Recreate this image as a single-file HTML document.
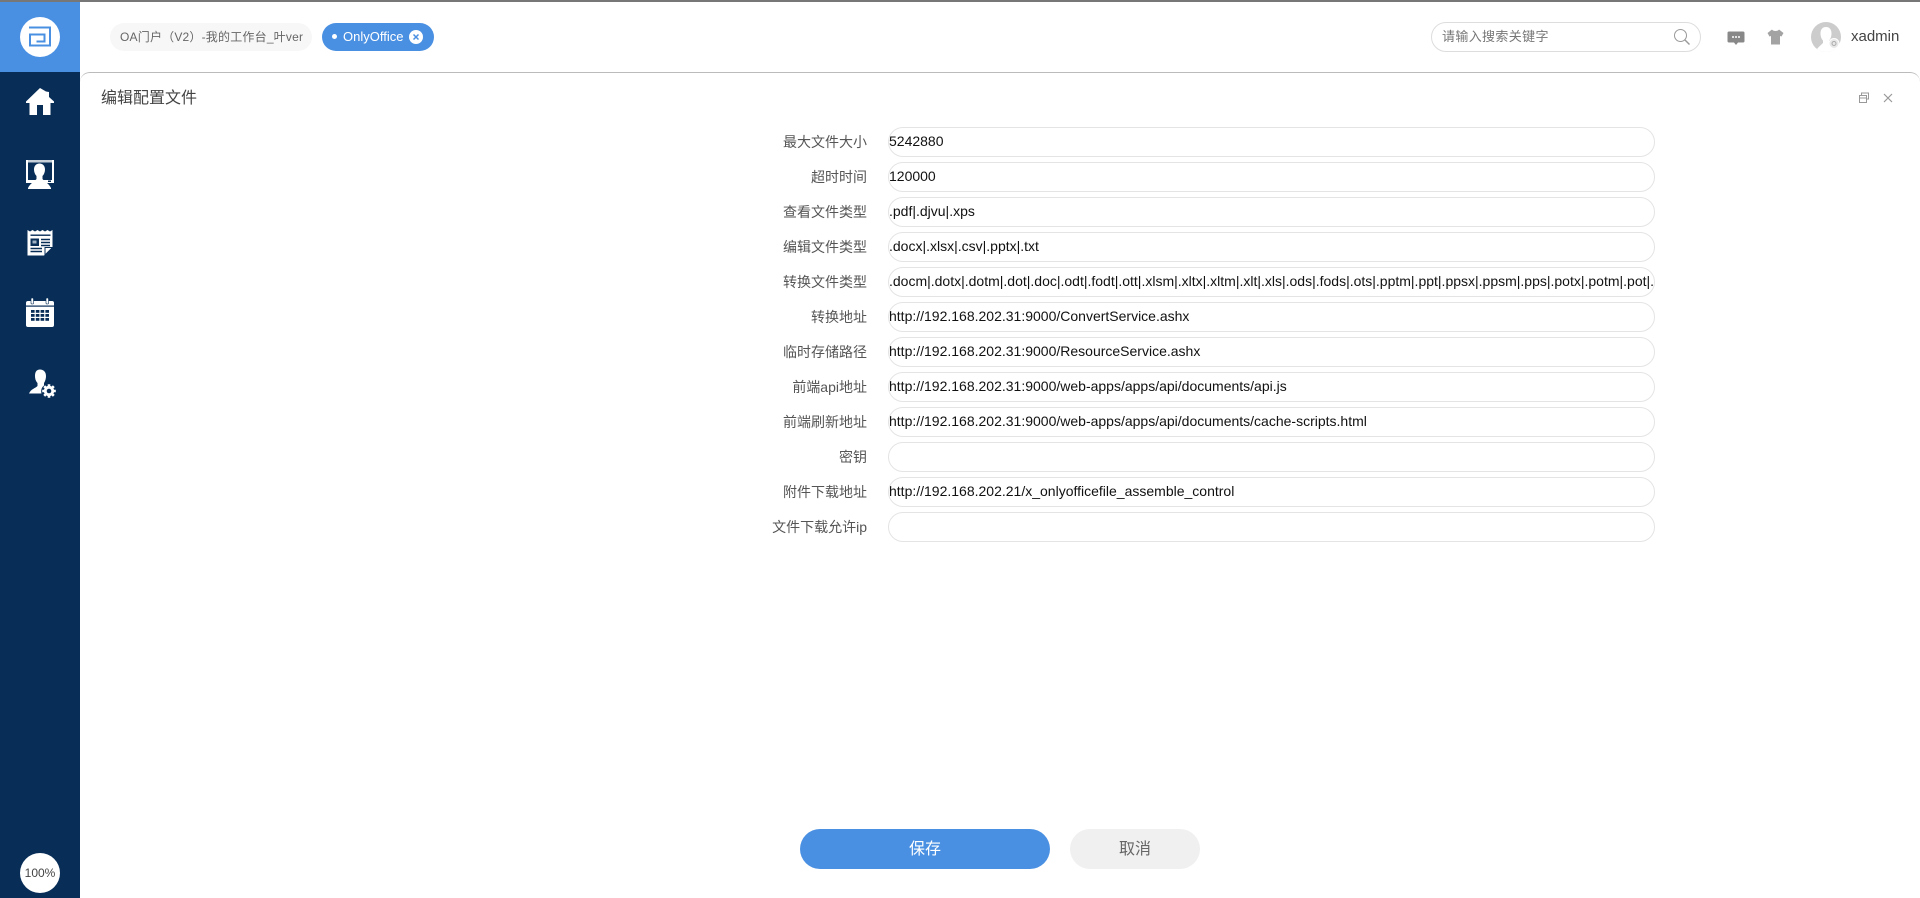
<!DOCTYPE html>
<html lang="zh"><head><meta charset="utf-8"><title>编辑配置文件</title>
<style>
*{box-sizing:border-box}
html,body{margin:0;padding:0;width:1920px;height:898px;overflow:hidden;background:#fff;font-family:"Liberation Sans","Noto Sans CJK SC",sans-serif}
.a{position:absolute}
.lab{position:absolute;left:700px;width:167px;height:30px;line-height:30px;text-align:right;font-size:14px;color:#555;white-space:nowrap}
.inp{position:absolute;left:888px;width:767px;height:30px;border:1px solid #e4e4e4;border-radius:15px;font-size:14px;line-height:26px;color:#111;padding:0;white-space:nowrap;overflow:hidden}
.inp span{display:block;margin-left:0;width:764px;overflow:hidden}
svg{position:absolute;display:block}
</style></head><body>
<div class="a" style="left:0;top:0;width:1920px;height:2px;background:#777"></div>
<div class="a" style="left:0;top:2px;width:80px;height:70px;background:#4a90e2"></div>
<div class="a" style="left:0;top:72px;width:80px;height:826px;background:#082e58"></div>
<div class="a" style="left:20px;top:17px;width:40px;height:40px;border-radius:50%;background:#fff"></div>
<svg style="left:28px;top:25px" width="24" height="22" viewBox="0 0 24 22" fill="none" stroke="#4a90e2" stroke-width="2"><path d="M1 2.500H22V20.500H2V9.500H16.500V16.500H8.500"/></svg>

<!-- sidebar icons -->
<svg style="left:25px;top:87px" width="30" height="30" viewBox="0 0 30 30" fill="#fff"><path d="M15 1L1 14.500V16H4.500V28H12V18H18V28H25.500V16H29V14.500L24 10V5H24L21 4.500L15 1Z"/></svg>
<svg style="left:25px;top:159px" width="30" height="31" viewBox="0 0 30 31" fill="#fff"><rect x="1" y="1" width="28" height="2.500" fill="#c6ced8"/><path d="M1 1H3V21H27V1H29V24H1Z"/><path d="M14.500 4.500C11 4.500 9 7 9 10.500C9 13 10 15.500 11.500 17V20C10 22 5.500 24 3 29V30H26V29C23.500 24 19 22 17.500 20V17C19 15.500 20 13 20 10.500C20 7 18 4.500 14.500 4.500Z"/><rect x="23" y="21.500" width="3" height="1.500" fill="#082e58"/></svg>
<svg style="left:26px;top:229px" width="28" height="28" viewBox="0 0 28 28"><path fill="#fff" d="M1.500 1L4 2.500L6.500 1L9 2.500L11.500 1L14 2.500L16.500 1L19 2.500L21.500 1L24 2.500L26.500 1V18L18 26.500H1.500Z"/><path fill="#fff" stroke="#082e58" d="M26.500 18.500H19V26Z"/><rect x="4.500" y="5.500" width="20" height="1.400" fill="#082e58"/><rect x="4.500" y="9.500" width="8.500" height="7.500" fill="#082e58"/><rect x="6.500" y="11.500" width="4" height="3" fill="#9db0c4"/><path stroke="#082e58" stroke-width="1.500" d="M15 10.500H24M15 13.500H24M15 16.500H24M4.500 19.500H16M4.500 22.500H16"/></svg>
<svg style="left:25px;top:298px" width="30" height="30" viewBox="0 0 30 30"><rect x="1" y="3" width="28" height="26" rx="2" fill="#fff"/><rect x="6" y="0" width="2.500" height="6" rx="1" fill="#fff" stroke="#082e58" stroke-width=".6"/><rect x="21" y="0" width="2.500" height="6" rx="1" fill="#fff" stroke="#082e58" stroke-width=".6"/><rect x="1" y="7.500" width="28" height="1.200" fill="#082e58"/><g fill="#082e58"><rect x="6" y="12" width="3.600" height="2.800"/><rect x="10.800" y="12" width="3.600" height="2.800"/><rect x="15.600" y="12" width="3.600" height="2.800"/><rect x="20.400" y="12" width="3.600" height="2.800"/><rect x="6" y="16" width="3.600" height="2.800"/><rect x="10.800" y="16" width="3.600" height="2.800"/><rect x="15.600" y="16" width="3.600" height="2.800"/><rect x="20.400" y="16" width="3.600" height="2.800"/><rect x="6" y="20" width="3.600" height="2.800"/><rect x="10.800" y="20" width="3.600" height="2.800"/><rect x="15.600" y="20" width="3.600" height="2.800"/><rect x="20.400" y="20" width="3.600" height="2.800"/></g></svg>
<svg style="left:28px;top:369px" width="29" height="30" viewBox="0 0 29 30" fill="#fff"><path d="M12 0.500C8.500 0.500 7 3 7 7C7 10 8 12.500 9.500 14V17C7 19.500 3 20 1 24.500H13.500C12.500 21 14 18 16 16.500V14C17 12.500 18 10 18 7C18 3 15.500 0.500 12 0.500Z"/><circle cx="21" cy="22" r="5.200"/><g stroke="#fff" stroke-width="2.600"><path d="M21 15.200V28.800M14.200 22H27.800M16.200 17.200L25.800 26.800M25.800 17.200L16.200 26.800"/></g><circle cx="21" cy="22" r="2.300" fill="#082e58"/></svg>

<div class="a" style="left:20px;top:853px;width:40px;height:40px;border-radius:50%;background:#fff;font-size:12px;line-height:41px;text-align:center;color:#444">100%</div>

<!-- tabs -->
<div class="a" style="left:110px;top:23px;width:202px;height:28px;border-radius:14px;background:#f7f7f7;font-size:12px;line-height:28px;color:#666;padding-left:10px;white-space:nowrap;letter-spacing:.2px">OA门户（V2）-我的工作台_叶ver</div>
<div class="a" style="left:322px;top:23px;width:112px;height:28px;border-radius:14px;background:#4a90e2;font-size:13px;line-height:27px;color:#fff;padding-left:21px;white-space:nowrap">OnlyOffice</div>
<div class="a" style="left:332px;top:34px;width:5px;height:5px;border-radius:50%;background:#fff"></div>
<svg style="left:409px;top:30px" width="14" height="14" viewBox="0 0 14 14"><circle cx="7" cy="7" r="7" fill="#fff"/><path d="M4.500 4.500L9.500 9.500M9.500 4.500L4.500 9.500" stroke="#4a90e2" stroke-width="1.500"/></svg>

<!-- search -->
<div class="a" style="left:1431px;top:22px;width:270px;height:30px;border:1px solid #ddd;border-radius:15px;font-size:13px;line-height:28px;color:#777;padding-left:10px;letter-spacing:.35px">请输入搜索关键字</div>
<svg style="left:1673px;top:28px" width="18" height="18" viewBox="0 0 18 18" fill="none" stroke="#999" stroke-width="1"><circle cx="7.500" cy="7.500" r="6"/><path d="M12 12L16.500 16.500" stroke-width="1.400"/></svg>

<!-- top icons -->
<svg style="left:1727px;top:31px" width="18" height="15" viewBox="0 0 18 15"><path fill="#888" d="M2 0.500H16Q17.500 .5 17.500 2V10Q17.500 11.500 16 11.500H11L9 14L7 11.500H2Q.5 11.500 .5 10V2Q.5 .5 2 .5Z"/><g fill="#fff"><circle cx="6" cy="6" r="1"/><circle cx="9" cy="6" r="1"/><circle cx="12" cy="6" r="1"/></g></svg>
<svg style="left:1767px;top:29px" width="17" height="16" viewBox="0 0 17 16"><path fill="#a3a3a3" d="M5 .5L.5 4L2.500 7.500L4 7V15.500H13V7L14.500 7.500L16.500 4L12 .5C11 2.500 6 2.500 5 .5Z"/></svg>
<svg style="left:1811px;top:22px" width="30" height="30" viewBox="0 0 30 30"><circle cx="15" cy="15" r="15" fill="#ccc"/><path fill="#fff" d="M15 5C11 5 9.500 8 9.500 11.500C9.500 14.500 10.500 17 12 18.500V21C10 23 7.500 25 6 27C8.500 29 11.500 30 15 30C18.500 30 21.500 29 24 27C22.500 25 20 23 18 21V18.500C19.500 17 20.500 14.500 20.500 11.500C20.500 8 19 5 15 5Z"/><circle cx="23" cy="21.500" r="5" fill="#e8e8e8" stroke="#fff"/><circle cx="23" cy="21.500" r="2" fill="none" stroke="#aaa"/></svg>
<div class="a" style="left:1851px;top:27px;font-size:15px;line-height:20px;color:#444">xadmin</div>

<!-- panel -->
<div class="a" style="left:80px;top:72px;width:1840px;height:12px;border-top:1px solid #bbb;border-radius:10px 10px 0 0;background:#fff"></div>
<div class="a" style="left:80px;top:72px;width:8px;height:8px;background:#999;z-index:-1"></div>
<div class="a" style="left:1912px;top:72px;width:8px;height:8px;background:#999;z-index:-1"></div>
<div class="a" style="left:101px;top:86px;font-size:16px;line-height:26px;color:#444">编辑配置文件</div>
<svg style="left:1858px;top:92px" width="12" height="12" viewBox="0 0 12 12" fill="none" stroke="#999"><path d="M3.500 3V1H10.500V7H8.500"/><rect x="1.500" y="3.500" width="7" height="7"/><path d="M1.500 6H8.500"/></svg>
<svg style="left:1882px;top:92px" width="12" height="12" viewBox="0 0 12 12" fill="none" stroke="#999" stroke-width="1.200"><path d="M2 2L10 10M10 2L2 10"/></svg>

<!-- form -->
<div class="lab" style="top:127px">最大文件大小</div><div class="inp" style="top:127px"><span>5242880</span></div>
<div class="lab" style="top:162px">超时时间</div><div class="inp" style="top:162px"><span>120000</span></div>
<div class="lab" style="top:197px">查看文件类型</div><div class="inp" style="top:197px"><span>.pdf|.djvu|.xps</span></div>
<div class="lab" style="top:232px">编辑文件类型</div><div class="inp" style="top:232px"><span>.docx|.xlsx|.csv|.pptx|.txt</span></div>
<div class="lab" style="top:267px">转换文件类型</div><div class="inp" style="top:267px"><span>.docm|.dotx|.dotm|.dot|.doc|.odt|.fodt|.ott|.xlsm|.xltx|.xltm|.xlt|.xls|.ods|.fods|.ots|.pptm|.ppt|.ppsx|.ppsm|.pps|.potx|.potm|.pot|.odp|.fodp|.otp</span></div>
<div class="lab" style="top:302px">转换地址</div><div class="inp" style="top:302px"><span>http://192.168.202.31:9000/ConvertService.ashx</span></div>
<div class="lab" style="top:337px">临时存储路径</div><div class="inp" style="top:337px"><span>http://192.168.202.31:9000/ResourceService.ashx</span></div>
<div class="lab" style="top:372px">前端api地址</div><div class="inp" style="top:372px"><span>http://192.168.202.31:9000/web-apps/apps/api/documents/api.js</span></div>
<div class="lab" style="top:407px">前端刷新地址</div><div class="inp" style="top:407px"><span>http://192.168.202.31:9000/web-apps/apps/api/documents/cache-scripts.html</span></div>
<div class="lab" style="top:442px">密钥</div><div class="inp" style="top:442px"><span></span></div>
<div class="lab" style="top:477px">附件下载地址</div><div class="inp" style="top:477px"><span>http://192.168.202.21/x_onlyofficefile_assemble_control</span></div>
<div class="lab" style="top:512px">文件下载允许ip</div><div class="inp" style="top:512px"><span></span></div>

<!-- buttons -->
<div class="a" style="left:800px;top:829px;width:250px;height:40px;border-radius:20px;background:#4a90e2;color:#fff;font-size:16px;line-height:41px;text-align:center">保存</div>
<div class="a" style="left:1070px;top:829px;width:130px;height:40px;border-radius:20px;background:#f0f0f0;color:#666;font-size:16px;line-height:41px;text-align:center">取消</div>
</body></html>
